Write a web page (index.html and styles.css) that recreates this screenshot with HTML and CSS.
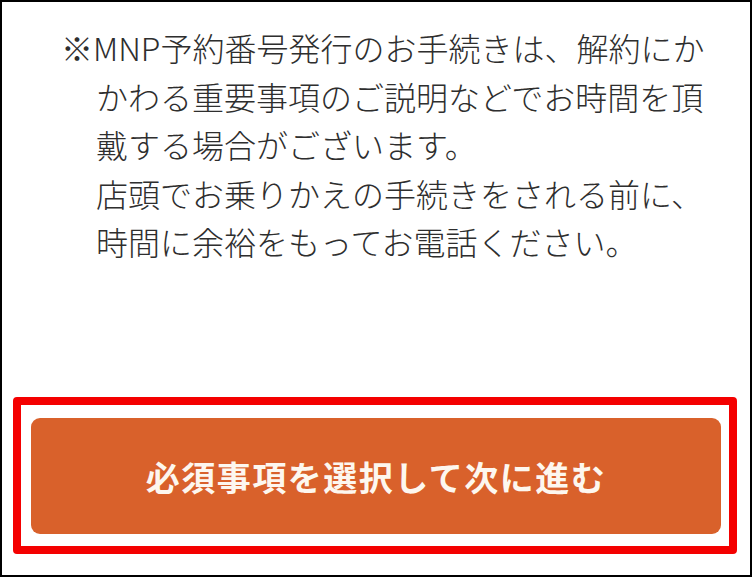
FILE: index.html
```html
<!DOCTYPE html>
<html lang="ja">
<head>
<meta charset="utf-8">
<title>MNP予約番号発行</title>
<link rel="stylesheet" href="styles.css">
</head>
<body>
	<div class="frame">
		<p class="note">※MNP予約番号発行のお手続きは、解約にか<br>かわる重要事項のご説明などでお時間を頂<br>戴する場合がございます。<br>店頭でお乗りかえの手続きをされる前に、<br>時間に余裕をもってお電話ください。</p>
		<div class="mark">
			<a class="btn" href="#">必須事項を選択して次に進む</a>
		</div>
	</div>
</body>
</html>
```

FILE: styles.css
```css
*{margin:0;padding:0;box-sizing:border-box;}
body{background:#fff;font-family:"Noto Sans CJK JP","Noto Sans",sans-serif;}
.frame{width:752px;height:577px;border:2px solid #000;display:flex;flex-direction:column;}
.note{margin-top:21px;padding-left:94px;text-indent:-35px;font-size:32px;font-weight:300;line-height:48.5px;color:#2e2e2e;white-space:nowrap;}
/* 赤枠で囲んだボタン */
.mark{margin:auto 13px 21px 11px;border:8px solid #f40000;border-radius:4px;padding:13px 8px 12px 10px;}
.btn{display:flex;align-items:center;justify-content:center;height:116px;background:#d9612b;border-radius:9px;color:#fdf7ef;font-size:34px;font-weight:bold;letter-spacing:1.5px;text-decoration:none;}
```
